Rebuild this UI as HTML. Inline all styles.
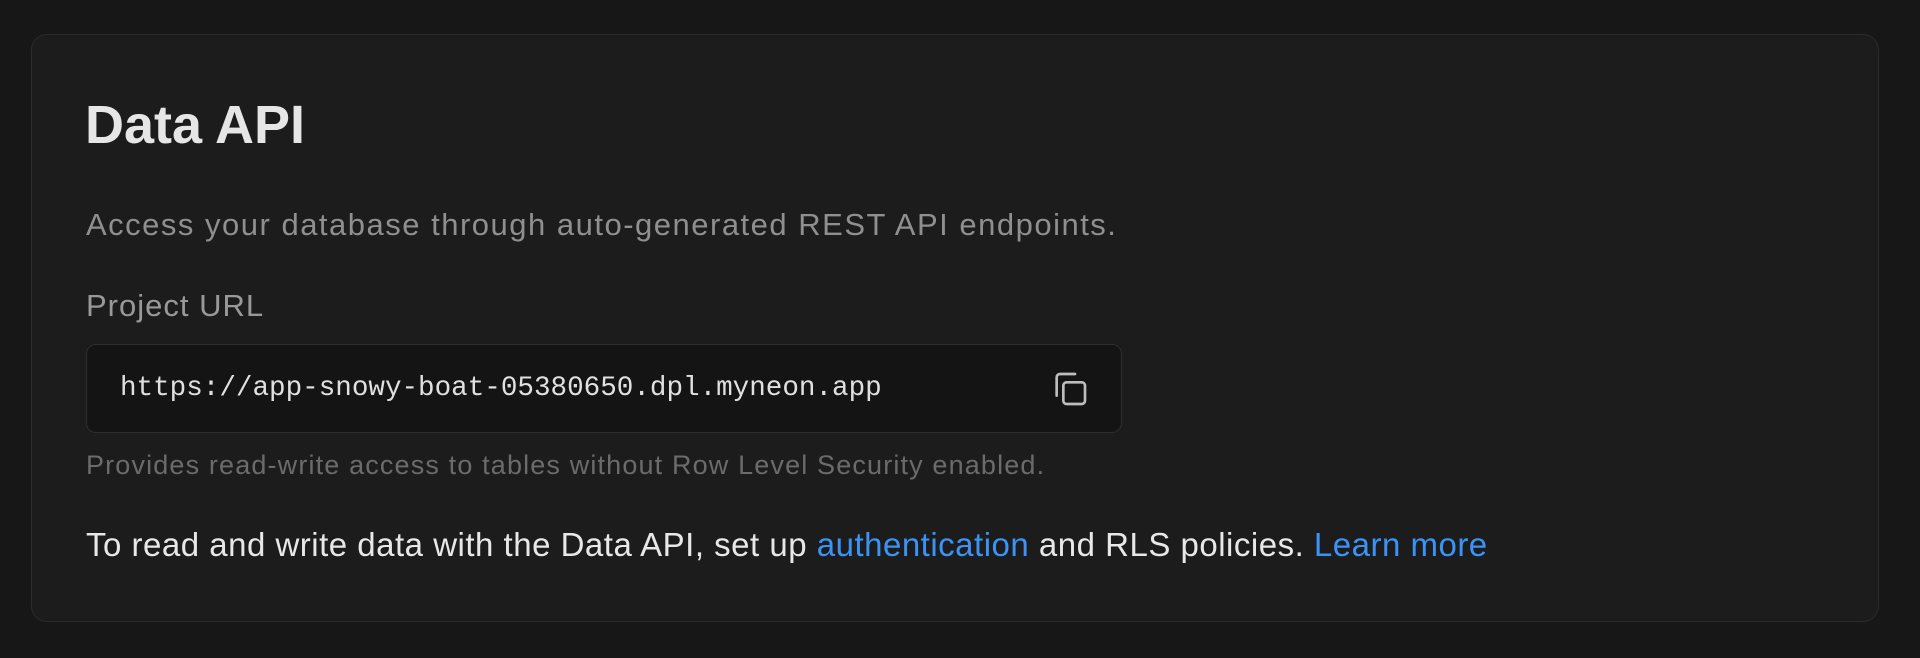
<!DOCTYPE html>
<html><head><meta charset="utf-8"><style>
html,body{margin:0;padding:0;width:1920px;height:658px;background:#171717;overflow:hidden;font-family:"Liberation Sans",sans-serif}
.card{position:absolute;left:31px;top:34px;width:1848px;height:588px;background:#1c1c1c;border:1px solid #2b2b2b;border-radius:16px;box-sizing:border-box}
.t{position:absolute;white-space:nowrap;line-height:1.15}
h1{position:absolute;left:85px;top:98px;margin:0;font-size:54px;font-weight:600;color:#e6e6e6;line-height:1}
.box{position:absolute;left:86px;top:344px;width:1036px;height:89px;background:#141414;border:1px solid #2e2e2e;border-radius:10px;box-sizing:border-box}
a{color:#3b93f5;text-decoration:none}
</style></head><body>
<div class="card"></div>
<h1>Data API</h1>
<div class="t" style="left:86px;top:207px;font-size:31px;letter-spacing:1.5px;color:#8f8f8f">Access your database through auto-generated REST API endpoints.</div>
<div class="t" style="left:86px;top:288px;font-size:31px;letter-spacing:1px;color:#999">Project URL</div>
<div class="box"></div>
<div class="t" style="left:120px;top:373px;font-family:'Liberation Mono',monospace;font-size:27.6px;color:#e0e0e0">https://app-snowy-boat-05380650.dpl.myneon.app</div>
<svg style="position:absolute;left:1050px;top:369px" width="40" height="40" viewBox="0 0 24 24" fill="none" stroke="#bdbdbd" stroke-width="1.6" stroke-linecap="round" stroke-linejoin="round"><rect x="8" y="8" width="13" height="13" rx="2"/><path d="M4 16V5a2 2 0 0 1 2-2h9"/></svg>
<div class="t" style="left:86px;top:450px;font-size:27px;letter-spacing:1.15px;color:#6b6b6b">Provides read-write access to tables without Row Level Security enabled.</div>
<div class="t" style="left:86px;top:526px;font-size:33px;letter-spacing:0.5px;color:#e8e8e8">To read and write data with the Data API, set up <a>authentication</a> and RLS policies. <a>Learn more</a></div>
</body></html>
